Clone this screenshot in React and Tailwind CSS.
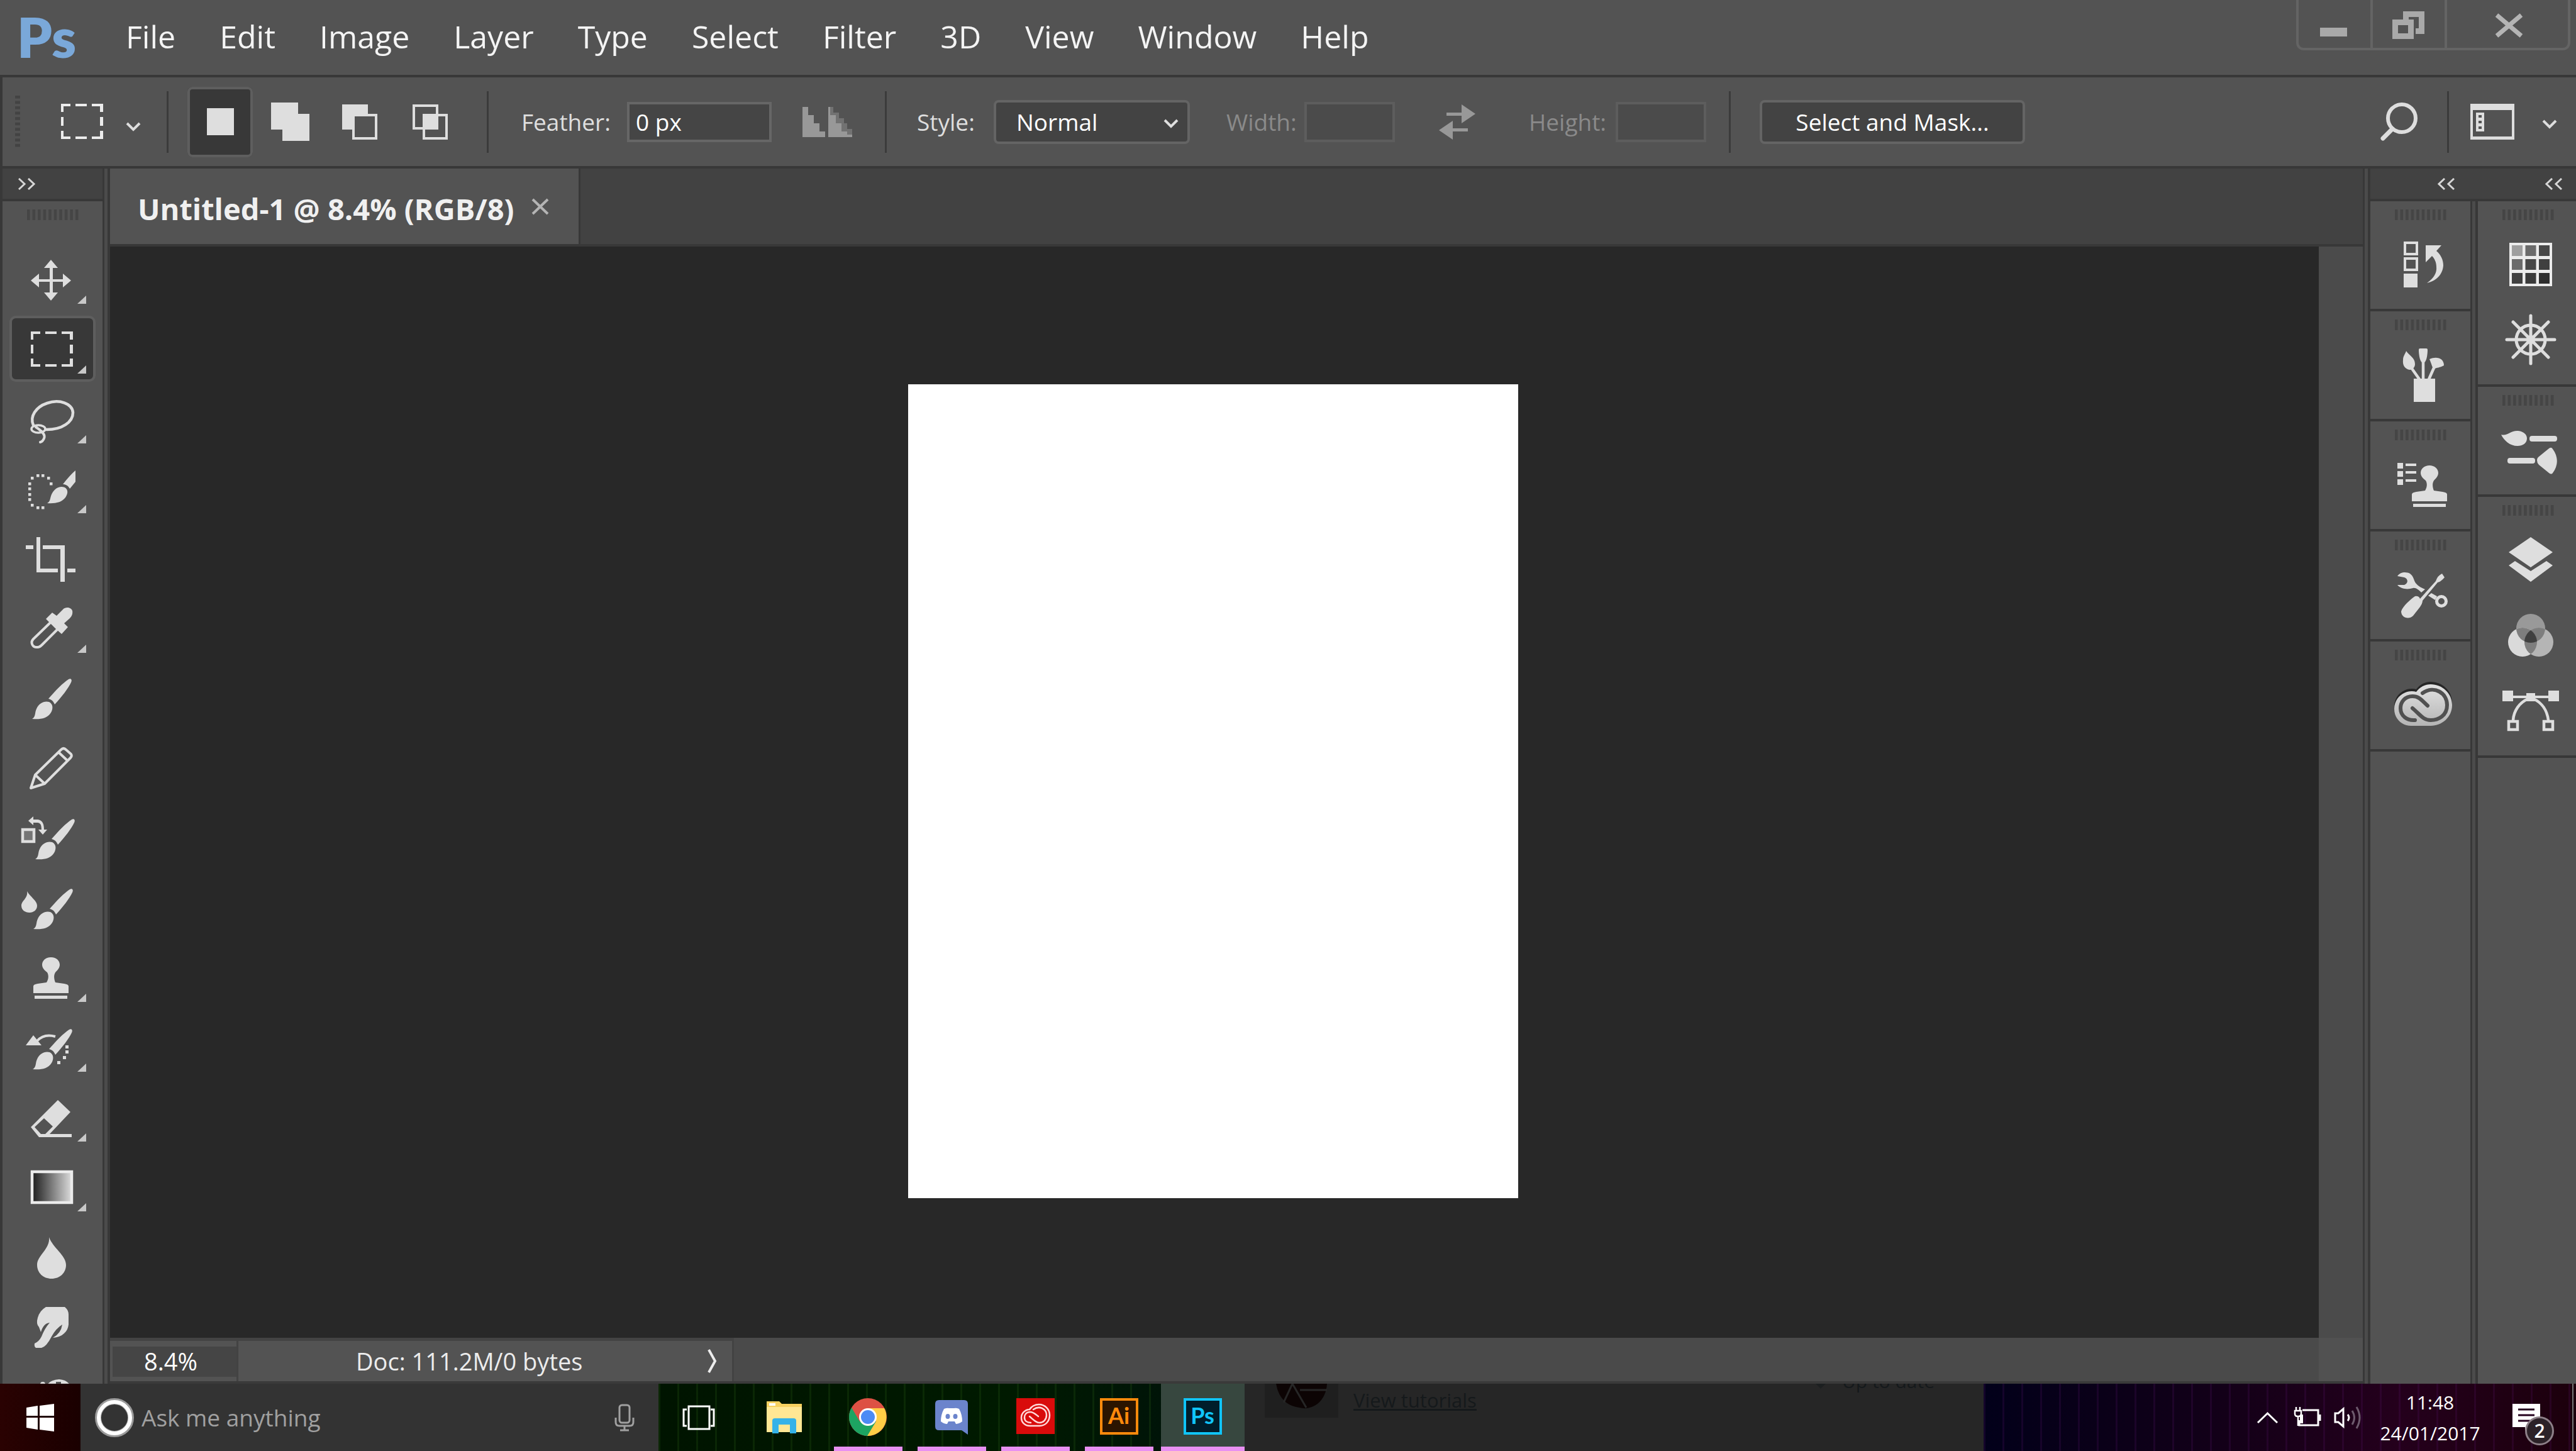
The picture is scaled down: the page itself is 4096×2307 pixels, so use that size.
import React, { useState } from 'react';

const MENUS = ['File', 'Edit', 'Image', 'Layer', 'Type', 'Select', 'Filter', '3D', 'View', 'Window', 'Help'];

const BRUSH = (
    <>
        <path d="M47 89 C53 86 51 79 54 73 C58 64 66 60 74 62 C80 65 81 72 77 79 C71 89 59 90 47 89 Z" />
        <path d="M73 57 C84 44 97 31 105 26 C109 24 111 27 109 31 C105 40 94 54 83 66 C81 61 78 58 73 57 Z" />
    </>
);

const STAMP = (
    <>
        <path d="M77 24 C85 24 91 29 91 36 C91 41 87 45 84 48 C81 53 82 59 84 64 L98 66 Q105 67 105 70 V81 H49 V70 Q49 67 56 66 L70 64 C73 59 74 53 71 48 C67 45 63 41 63 36 C63 29 69 24 77 24 Z" />
        <rect x="51" y="85" width="52" height="5" />
    </>
);

const QUICK_DOTS = [[47, 39], [56, 35], [64, 35], [73, 39], [77, 48], [43, 48], [43, 56], [43, 65], [43, 73], [47, 82], [56, 86], [64, 86]];

const TOOLS = [
    {
        name: 'Move Tool', more: true, art: (
            <>
                <path d="M77 25 L88 38 H66 Z M77 90 L88 77 H66 Z M45 58 L58 47 V69 Z M109 58 L96 47 V69 Z" />
                <path d="M75 34 H80 V82 H75 Z M54 56 H100 V60 H54 Z" />
            </>
        ),
    },
    {
        name: 'Rectangular Marquee Tool', more: true, art: (
            <path d="M45 28 H60 V32 H49 V41 H45 Z M68 28 H86 V32 H68 Z M94 28 H112 V41 H107 V32 H94 Z M45 49 H49 V63 H45 Z M107 49 H112 V63 H107 Z M45 71 H49 V80 H60 V84 H45 Z M68 80 H86 V84 H68 Z M94 80 H107 V71 H112 V84 H94 Z" />
        ),
    },
    {
        name: 'Lasso Tool', more: true, art: (
            <g fill="none" stroke="#dedede" strokeWidth="4.5" strokeLinecap="round">
                <path d="M49 66 C43 52 53 37 71 31 C91 24 111 32 112 46 C112 61 95 73 70 73" />
                <ellipse cx="57" cy="72" rx="11" ry="6" strokeWidth="3.5" />
                <path d="M53 69 C62 75 69 81 66 87 Q64 92 60 93" strokeWidth="4" />
            </g>
        ),
    },
    {
        name: 'Quick Selection Tool', more: true, art: (
            <>
                {QUICK_DOTS.map(([x, y]) => <rect key={`${x}-${y}`} x={x - 2} y={y - 2} width="4.5" height="4.5" />)}
                <path d="M71 79 C77 76 75 70 79 63 C84 54 92 51 99 54 C105 58 104 64 100 70 C94 78 83 80 71 79 Z" />
                <path d="M96 49 C102 41 109 33 116 27 V45 L107 56 C104 51 101 49 96 49 Z" />
            </>
        ),
    },
    {
        name: 'Crop Tool', more: false, art: (
            <path d="M54 22 H60 V72 H88 V78 H54 Z M64 35 H99 V93 H92 V41 H64 Z M37 35 H49 V41 H37 Z M103 72 H116 V78 H103 Z" />
        ),
    },
    {
        name: 'Eyedropper Tool', more: true, art: (
            <>
                <path d="M69 41 L79 31 L86 36 L96 26 C101 21 109 23 111 28 C112 33 110 37 107 40 L98 48 L104 54 L94 65 L86 58 L79 51 Z" />
                <path d="M77 46 L49 73 C44 78 47 87 56 86 C59 86 61 84 63 82 L88 57" fill="none" stroke="#dedede" strokeWidth="4" />
            </>
        ),
    },
    { name: 'Brush Tool', more: false, art: BRUSH },
    {
        name: 'Pencil Tool', more: false, art: (
            <path d="M45 88 L52 67 L93 27 Q97 23 101 27 L109 34 Q111 37 108 40 L67 81 Z M52 67 L67 81 M89 31 L104 45" fill="none" stroke="#dedede" strokeWidth="4" strokeLinejoin="round" />
        ),
    },
    {
        name: 'Color Replacement Tool', more: false, art: (
            <>
                <rect x="32" y="43" width="18" height="19" fill="#757575" stroke="#dedede" strokeWidth="4.5" />
                <path d="M41 29 L49 22 V27 H56 Q66 28 66 43 H71 L64 51 L57 43 H62 Q62 32 56 32 H49 V36 Z" />
                <g transform="translate(5 1)">{BRUSH}</g>
            </>
        ),
    },
    {
        name: 'Mixer Brush Tool', more: false, art: (
            <>
                <path d="M39 30 C44 39 55 45 55 53 C55 60 49 64 43 64 C36 64 30 60 30 53 C30 45 41 41 39 30 Z" />
                <g transform="translate(2 1)">{BRUSH}</g>
            </>
        ),
    },
    { name: 'Clone Stamp Tool', more: true, art: STAMP },
    {
        name: 'History Brush Tool', more: true, art: (
            <>
                <path d="M37 53 L49 37 L62 53 Z" />
                <path d="M55 46 Q66 34 84 39" fill="none" stroke="#dedede" strokeWidth="4" />
                <g transform="translate(1 2)">{BRUSH}</g>
                <path d="M100 53 H105 V58 H100 Z M100 61 H105 V66 H100 Z M96 70 H101 V75 H96 Z M87 78 H92 V83 H87 Z" />
            </>
        ),
    },
    {
        name: 'Eraser Tool', more: true, art: (
            <path fillRule="evenodd" d="M45 72 L88 29 L108 48 L75 83 H110 V88 H58 Z M51 72 L66 58 L80 71 L68 83 H61 Z" />
        ),
    },
    {
        name: 'Gradient Tool', more: true, art: (
            <>
                <defs>
                    <linearGradient id="ramp">
                        <stop offset="0" stopColor="#1c1c1c" />
                        <stop offset="1" stopColor="#dcdcdc" />
                    </linearGradient>
                </defs>
                <rect x="47" y="32" width="63" height="49" fill="url(#ramp)" stroke="#ececec" strokeWidth="4.5" />
            </>
        ),
    },
    {
        name: 'Blur Tool', more: false, art: (
            <path d="M74 25 C80 42 101 54 101 69 C101 82 91 91 78 91 C65 91 55 82 55 69 C55 54 76 44 74 25 Z" />
        ),
    },
    {
        name: 'Smudge Tool', more: false, art: (
            <path d="M69 25 H99 Q105 30 105 37 V53 Q104 62 98 67 Q92 73 80 74 Q93 67 95 53 Q85 59 78 72 Q70 88 62 90 H53 Q50 88 51 83 Q58 80 62 72 Q67 59 75 50 Q65 51 61 65 L58 57 Q53 52 56 42 Q59 31 69 25 Z" />
        ),
    },
    {
        name: 'Sponge Tool', more: true, art: (
            <>
                <path fillRule="evenodd" d="M70 40 Q74 30 90 29 Q104 30 109 41 V60 H70 Z M85 33 H93 V37 H85 Z" />
                <circle cx="64" cy="37" r="4" />
            </>
        ),
    },
];

const CLOUD = 'M65 134 C49 134 38 122 38 107 C38 91 51 79 66 79 Q70 79 73 80 C79 72 87 68 96 68 C114 68 130 82 130 101 C130 120 114 134 96 134 Z';

const DOCK_LEFT = [
    {
        height: 'h-[175px]', name: 'History', art: (
            <>
                <path d="M55 66 H74 V84 H55 Z M55 91 H74 V109 H55 Z" fill="none" stroke="#dedede" strokeWidth="4" />
                <rect x="53" y="115" width="22" height="22" />
                <path d="M88 70 H113 L105 79 C112 85 116 93 116 102 C115 117 104 127 90 130 C101 122 106 114 105 104 C105 97 102 91 98 87 L88 97 Z" />
            </>
        ),
    },
    {
        height: 'h-[175px]', name: 'Brush Presets', art: (
            <>
                <rect x="69" y="107" width="34" height="37" />
                <path d="M66 91 L78 108 M84 80 V108 M101 90 L93 108" fill="none" stroke="#dedede" strokeWidth="4.5" />
                <path d="M57 63 C62 71 71 73 71 84 C71 89 67 93 63 93 C55 92 51 86 52 77 C52 71 56 67 57 63 Z" />
                <path d="M77 61 Q77 59 79 59 H89 Q91 59 91 61 C91 70 89 82 84 82 C79 82 77 70 77 61 Z" />
                <path d="M94 76 C106 71 117 75 117 86 C110 90 106 89 101 92 C98 89 98 85 94 76 Z" />
            </>
        ),
    },
    {
        height: 'h-[175px]', name: 'Clone Source', art: (
            <>
                <path d="M43 66 H52 V75 H43 Z M43 79 H52 V88 H43 Z M43 92 H52 V101 H43 Z M56 67 H73 V71 H56 Z M56 79 H73 V83 H56 Z M56 92 H73 V96 H56 Z" />
                <g transform="translate(17 46)">{STAMP}</g>
            </>
        ),
    },
    {
        height: 'h-[175px]', name: 'Tool Presets', art: (
            <>
                <path d="M43 71 C48 64 57 64 63 67 C69 71 69 78 72 82 C76 87 82 90 87 92 L81 97 C77 93 72 89 68 90 C58 93 48 91 43 85 H54 C61 82 60 75 54 73 Z" />
                <path d="M92 102 L97 98 L106 103 L103 109 Z" />
                <circle cx="113" cy="111" r="7.5" fill="none" stroke="#dedede" strokeWidth="5" />
                <path d="M114 67 L118 73 Q112 80 107 81 L83 110 Q83 114 79 120 L68 134 C61 141 49 137 49 127 C52 118 64 108 71 103 Q77 102 79 107 L104 79 Q107 70 114 67 Z" />
            </>
        ),
    },
    {
        height: 'h-[175px]', name: 'Libraries', art: (
            <>
                <defs>
                    <linearGradient id="cloud" x1="0" y1="0" x2="0" y2="1">
                        <stop offset="0" stopColor="#e2e2e2" />
                        <stop offset="1" stopColor="#b4b4b4" />
                    </linearGradient>
                </defs>
                <path d={CLOUD} fill="#262626" transform="translate(0 -4)" />
                <path d={CLOUD} fill="url(#cloud)" />
                <g fill="none" stroke="#505050" strokeWidth="6" strokeLinecap="round">
                    <path d="M83 82 C102 69 122 82 122 101 C122 118 108 125 96 125 C84 125 80 117 67 106" />
                    <path d="M91 102 C82 94 78 87 67 87 C55 87 48 96 48 106 C48 118 58 126 71 125" />
                </g>
            </>
        ),
    },
];

const SWATCHES = [
    ['#9f9f9f', '#6b6b6b', '#484848'],
    ['#6b6b6b', '#484848', '#404040'],
    ['#404040', '#3a3a3a', '#2f2f2f'],
];

const DOCK_RIGHT = [
    {
        height: 'h-[295px]', name: 'Color and Navigator', art: (
            <>
                <rect x="50" y="66" width="68" height="69" fill="#ececec" />
                {SWATCHES.map((row, r) => row.map((fill, c) => (
                    <rect key={`${r}-${c}`} x={54 + c * 21.5} y={70 + r * 22} width="17" height="17" fill={fill} />
                )))}
                <g fill="none" stroke="#dedede" strokeWidth="5" strokeLinecap="round">
                    <circle cx="84" cy="220" r="23" />
                    <path d="M84 182 V258 M46 220 H122 M56 192 L112 248 M112 192 L56 248" />
                </g>
                <circle cx="84" cy="220" r="7" />
            </>
        ),
    },
    {
        height: 'h-[175px]', name: 'Brush Settings', art: (
            <>
                <path d="M37 76 C47 79 52 69 64 70 C73 71 78 76 78 82 C78 90 71 94 63 94 C51 94 42 86 37 76 Z" />
                <rect x="82" y="78" width="44" height="9" rx="4" />
                <rect x="47" y="113" width="44" height="9" rx="4" />
                <path d="M94 117 Q94 113 97 111 L113 98 Q117 95 119 99 C128 111 128 125 119 137 Q117 140 113 137 L97 124 Q94 121 94 117 Z" />
            </>
        ),
    },
    {
        height: 'h-[415px]', name: 'Layers, Channels and Paths', art: (
            <>
                <path d="M84 64 L119 88 L84 112 L49 88 Z M49 109 L59 102 L84 118 L109 102 L119 109 L84 135 Z" />
                <clipPath id="top"><circle cx="84" cy="209" r="23" /></clipPath>
                <clipPath id="left"><circle cx="71" cy="231" r="23" /></clipPath>
                <clipPath id="both"><circle cx="71" cy="231" r="23" clipPath="url(#top)" /></clipPath>
                <circle cx="84" cy="209" r="23" fill="#999" />
                <circle cx="71" cy="231" r="23" fill="#dadada" />
                <circle cx="97" cy="231" r="23" fill="#b5b5b5" />
                <circle cx="71" cy="231" r="23" fill="#7e7e7e" clipPath="url(#top)" />
                <circle cx="97" cy="231" r="23" fill="#7e7e7e" clipPath="url(#top)" />
                <circle cx="97" cy="231" r="23" fill="#7e7e7e" clipPath="url(#left)" />
                <circle cx="97" cy="231" r="23" fill="#404040" clipPath="url(#both)" />
                <path d="M39 308 H56 V325 H39 Z M112 308 H129 V325 H112 Z M77 312 H91 V325 H77 Z M56 316 H112 V320 H56 Z" />
                <path d="M80 321 C66 327 57 340 56 355 M88 321 C102 327 110 340 112 355 M49 357 H63 V370 H49 Z M105 357 H119 V370 H105 Z" fill="none" stroke="#dedede" strokeWidth="4.5" />
            </>
        ),
    },
];

// Little ribbed handle on top of each panel
const Grip = () => (
    <svg className="w-[82px] h-[17px]" viewBox="0 0 82 17">
        {[...Array(10)].map((_, i) => <rect key={i} x={i * 8.55} width="4.5" height="17" fill="#454545" />)}
    </svg>
);

const Divider = ({ className }) => <div className={`w-[3px] h-[98px] shrink-0 bg-[#3b3b3b] ${className}`} />;

const Gutter = () => <div className="w-3 shrink-0 bg-[#4b4b4b] border-l-[3px] border-r-4 border-[#383838]" />;

const Chevron = ({ className }) => (
    <svg className={`w-6 h-[15px] shrink-0 ${className}`} viewBox="0 0 24 15" fill="none" stroke="#dedede" strokeWidth="4">
        <path d="M2 2 L12 12 L22 2" />
    </svg>
);

const Collapse = ({ flip, label }) => (
    <button aria-label={label} className="w-[27px] h-[19px]">
        <svg className={flip ? 'w-full h-full rotate-180' : 'w-full h-full'} viewBox="0 0 27 19" fill="none" stroke="#d6d6d6" strokeWidth="3">
            <path d="M11 1 L2 9.500 L11 18 M26 1 L17 9.500 L26 18" />
        </svg>
    </button>
);

const MenuBar = () => (
    <header className="flex items-center h-[123px] pb-1 shrink-0 border-b-4 border-[#383838]">
        <span className="w-[200px] pl-[27px] shrink-0 font-['Lato'] font-extrabold text-[88px] leading-none text-[#7aa8d9]">Ps</span>
        <nav className="flex gap-[70px]">
            {MENUS.map(m => <button key={m} className="text-[50px] leading-none text-[#f4f4f4]">{m}</button>)}
        </nav>
        <div className="flex self-start ml-auto mr-[9px] w-[436px] h-20 border-x-4 border-b-4 border-[#646464] rounded-b-xl">
            <button aria-label="Minimize" className="w-[118px] border-r-4 border-[#646464]">
                <svg className="w-full h-full" viewBox="0 0 114 76"><rect x="34" y="44" width="43" height="14" fill="#a9a9a9" /></svg>
            </button>
            <button aria-label="Restore" className="w-[118px] border-r-4 border-[#646464]">
                <svg className="w-full h-full" viewBox="0 0 114 76" fill="#a9a9a9">
                    <path fillRule="evenodd" d="M31 31 H65 V62 H31 Z M40 40 V53 H56 V40 Z" />
                    <path d="M48 18 H82 V54 H68 V45 H73 V27 H57 V31 H48 Z" />
                </svg>
            </button>
            <button aria-label="Close" className="flex-1">
                <svg className="w-full h-full" viewBox="0 0 192 76" stroke="#b4b4b4" strokeWidth="7">
                    <path d="M79 24 L118 57 M118 24 L79 57" />
                </svg>
            </button>
        </div>
    </header>
);

const MODES = [
    { name: 'New selection', art: <path d="M31 34 H74 V77 H31 Z" /> },
    { name: 'Add to selection', art: <path d="M22 25 H65 V43 H83 V86 H40 V68 H22 Z" /> },
    { name: 'Subtract from selection', art: <path fillRule="evenodd" d="M24 28 H65 V43 H80 V84 H40 V68 H24 Z M44 47 V80 H76 V47 Z" /> },
    { name: 'Intersect with selection', art: <path fillRule="evenodd" d="M25 28 H66 V43 H81 V84 H41 V68 H25 Z M29 32 V64 H41 V43 H62 V32 Z M66 47 V68 H45 V80 H77 V47 Z" /> },
];

const OptionsBar = () => {
    const [mode, setMode] = useState(0);
    const [feather, setFeather] = useState('0 px');

    return (
        <div className="flex items-center h-[145px] shrink-0 border-l-4 border-b-4 border-[#383838] text-[37px] text-[#dedede]">
            <svg className="ml-5 w-2 h-[83px] shrink-0" viewBox="0 0 8 83">
                {[...Array(10)].map((_, i) => <rect key={i} y={i * 8.55} width="8" height="4.5" fill="#434343" />)}
            </svg>
            <button aria-label="Tool preset" className="flex items-center ml-[65px]">
                <svg className="w-[67px] h-[57px]" viewBox="45 28 67 57" fill="#ececec">{TOOLS[1].art}</svg>
                <Chevron className="ml-9 mt-4" />
            </button>
            <Divider className="ml-[41px]" />
            <div className="flex gap-[7px] ml-[30px]">
                {MODES.map((m, i) => (
                    <button
                        key={m.name}
                        aria-label={m.name}
                        onClick={() => setMode(i)}
                        className={`w-[104px] h-28 rounded-lg ${mode === i ? 'bg-[#383838] outline-4 -outline-offset-4 outline-[#5e5e5e]' : ''}`}
                    >
                        <svg className="w-full h-full" viewBox="0 0 104 112" fill="#dedede">{m.art}</svg>
                    </button>
                ))}
            </div>
            <Divider className="ml-[39px]" />
            <label htmlFor="feather" className="ml-[52px] w-[168px]">Feather:</label>
            <input
                id="feather"
                value={feather}
                onChange={e => setFeather(e.target.value)}
                className="w-[230px] h-16 pl-2.5 border-4 border-[#666] bg-[#454545] text-white"
            />
            <svg className="ml-[49px] w-20 h-12 shrink-0" viewBox="0 0 80 48">
                <path d="M0 0 H9 V13 H18 V26 H27 V39 H36 V48 H0 Z" fill="#989898" />
                <path d="M41 0 H49 V9 H58 V18 H66 V26 H71 V35 H79 V48 H41 Z" fill="#727272" />
                <path d="M41 0 H44 V13 H53 V26 H62 V39 H71 V44 H79 V48 H41 Z" fill="#989898" />
            </svg>
            <Divider className="ml-[51px]" />
            <label htmlFor="style" className="ml-12 w-[122px]">Style:</label>
            <div className="relative">
                <select id="style" className="appearance-none w-[312px] h-[70px] pl-8 border-4 border-[#646464] rounded-lg bg-[#434343] text-white">
                    <option>Normal</option>
                    <option>Fixed Ratio</option>
                    <option>Fixed Size</option>
                </select>
                <Chevron className="absolute right-[18px] top-[30px] pointer-events-none" />
            </div>
            <label htmlFor="width" className="ml-[58px] w-[124px] text-[#8a8a8a]">Width:</label>
            <input id="width" disabled className="w-36 h-16 border-4 border-[#5d5d5d] bg-[#4b4b4b]" />
            <button aria-label="Swap width and height" className="ml-[70px]">
                <svg className="w-[58px] h-14" viewBox="0 0 58 56" fill="#989898">
                    <path d="M12 13 H36 V0 L58 15 L36 30 V18 H12 Z M46 38 H22 V26 L0 41 L22 56 V43 H46 Z" />
                </svg>
            </button>
            <label htmlFor="height" className="ml-[85px] w-[138px] text-[#8a8a8a]">Height:</label>
            <input id="height" disabled className="w-36 h-16 border-4 border-[#5d5d5d] bg-[#4b4b4b]" />
            <Divider className="ml-9" />
            <button className="ml-[46px] w-[422px] h-[70px] border-4 border-[#646464] rounded-lg bg-[#434343] text-white">Select and Mask...</button>
            <button aria-label="Search" className="ml-auto">
                <svg className="w-[60px] h-[61px]" viewBox="0 0 60 61" fill="none" stroke="#dedede" strokeWidth="6" strokeLinecap="round">
                    <circle cx="34" cy="25" r="22" />
                    <path d="M19 42 L4 57" strokeWidth="7" />
                </svg>
            </button>
            <Divider className="ml-[46px]" />
            <button aria-label="Workspace" className="flex items-center ml-[34px] mr-[30px]">
                <svg className="w-[70px] h-[57px]" viewBox="0 0 70 57" fill="#dedede">
                    <path fillRule="evenodd" d="M0 0 H70 V57 H0 Z M4 10 V52 H66 V10 Z" />
                    <path fillRule="evenodd" d="M9 14 H22 V44 H9 Z M13 18 V22 H18 V18 Z M13 27 V31 H18 V27 Z M13 36 V40 H18 V36 Z" />
                </svg>
                <Chevron className="ml-[44px] mt-2" />
            </button>
        </div>
    );
};

const Toolbar = () => {
    const [tool, setTool] = useState(1);

    return (
        <aside className="flex flex-col w-[163px] shrink-0 border-l-4 border-[#383838]">
            <div className="flex items-center h-[52px] shrink-0 pl-[25px] bg-[#424242] border-b-4 border-[#383838]">
                <Collapse flip label="Expand tools" />
            </div>
            <div className="flex justify-center h-[68px] shrink-0 pt-[13px]"><Grip /></div>
            {TOOLS.map((t, i) => (
                <button key={t.name} aria-label={t.name} onClick={() => setTool(i)} className="h-[111px] shrink-0">
                    <svg className="w-[159px] h-[111px]" viewBox="0 0 159 111" fill="#dedede">
                        {tool === i && <rect x="13" y="5" width="133" height="101" rx="8" fill="#383838" stroke="#5e5e5e" strokeWidth="4" />}
                        {t.art}
                        {t.more && <path d="M119 95 L133 82 V95 Z" fill="#c8c8c8" />}
                    </svg>
                </button>
            ))}
        </aside>
    );
};

const Dock = ({ panels, width }) => (
    <div className={width}>
        {panels.map(p => (
            <section key={p.name} aria-label={p.name} className={`relative border-b-4 border-[#383838] ${p.height}`}>
                <div className="flex pl-[39px] pt-[13px]"><Grip /></div>
                <svg className="absolute inset-0 w-full h-full overflow-visible" fill="#dedede">{p.art}</svg>
            </section>
        ))}
    </div>
);

const DockArea = () => (
    <aside className="flex flex-col w-[327px] shrink-0">
        <div className="flex h-[52px] shrink-0 bg-[#424242] border-b-4 border-[#383838]">
            <div className="flex items-center justify-end w-[159px] pr-[25px]"><Collapse label="Expand left dock" /></div>
            <div className="flex items-center justify-end flex-1 pr-[22px]"><Collapse label="Expand right dock" /></div>
        </div>
        <div className="flex flex-1">
            <Dock panels={DOCK_LEFT} width="w-[159px]" />
            <Gutter />
            <Dock panels={DOCK_RIGHT} width="w-[156px]" />
        </div>
    </aside>
);

const Document = () => (
    <main className="flex flex-col flex-1 min-w-0">
        <div className="flex h-[124px] shrink-0 bg-[#424242] border-b-4 border-[#383838]">
            <div className="flex items-center w-[748px] pl-[44px] bg-[#535353] border-r-[3px] border-[#383838]">
                <span className="w-[626px] pt-2 text-[47px] font-bold whitespace-nowrap text-[#f0f0f0]">Untitled-1 @ 8.4% (RGB/8)</span>
                <button aria-label="Close document">
                    <svg className="w-7 h-[27px]" viewBox="0 0 28 27" stroke="#b4b4b4" strokeWidth="4"><path d="M2 2 L26 25 M26 2 L2 25" /></svg>
                </button>
            </div>
        </div>
        <div className="flex flex-1 min-h-0">
            <div className="flex items-center justify-center flex-1 pr-1 pb-1 bg-[#282828]">
                <div className="w-[970px] h-[1294px] bg-white" />
            </div>
            <div className="w-[70px] bg-[#4b4b4b]" />
        </div>
        <div className="flex h-[73px] shrink-0 border-b-4 border-[#3a3a3a] text-[38px]">
            <div className="flex w-[989px] pt-[5px] bg-[#434343]">
                <div className="w-[204px] bg-[#535353] border-r-[3px] border-[#434343] pt-1 pl-1">
                    <input aria-label="Zoom" defaultValue="8.4%" className="w-full h-12 pl-[50px] bg-[#454545] text-white" />
                </div>
                <div className="flex items-center flex-1 pl-[187px] pr-6 bg-[#535353] text-[#ececec]">
                    <span>Doc: 111.2M/0 bytes</span>
                    <button aria-label="Status options" className="ml-auto">
                        <svg className="w-[15px] h-[38px]" viewBox="0 0 15 38" fill="none" stroke="#ececec" strokeWidth="4"><path d="M2 1 L12 19 L2 37" /></svg>
                    </button>
                </div>
            </div>
            <div className="flex-1 bg-[#4a4a4a] border-l-[3px] border-[#434343]" />
            <div className="w-[70px] bg-[#515151]" />
        </div>
    </main>
);

const CC_MARK = (
    <g fill="none" stroke="#ffd9d9" strokeWidth="2.500" strokeLinecap="round">
        <path d="M22 44 C13 44 8 38 8 31 C8 24 14 18 21 18 C25 12 30 10 36 10 C46 10 53 18 53 27 C53 37 46 44 37 44 Z" />
        <path d="M27 18 C37 11 48 17 48 27 C48 34 43 39 37 39 C31 39 27 34 21 29" />
        <path d="M35 29 C30 25 27 22 22 22 C16 22 13 26 13 31 C13 36 17 39 23 39" />
    </g>
);

const APPS = [
    {
        name: 'File Explorer', art: (
            <>
                <path d="M2 5 H22 L26 9 H58 V54 H2 Z" fill="#f7d060" />
                <path d="M2 14 H58 V54 H2 Z" fill="#ffe794" />
                <path d="M6 8 H16 V12 H6 Z" fill="#fff" />
                <path d="M11 56 V36 Q11 32 15 32 H45 Q49 32 49 36 V56 H39 V42 H21 V56 Z" fill="#35b2e8" />
            </>
        ),
    },
    {
        name: 'Chrome', open: true, art: (
            <>
                <circle cx="30" cy="30" r="30" fill="#dd5144" />
                <path d="M4 15 A30 30 0 0 0 30 60 L43 37 L30 30 L17 37 Z" fill="#1da462" />
                <path d="M56 16 A30 30 0 0 1 29 60 L43 37 L30 16 Z" fill="#ffcd46" />
                <path d="M30 16 H56 L50 8 H20 Z" fill="#dd5144" />
                <circle cx="30" cy="30" r="14" fill="#fff" />
                <circle cx="30" cy="30" r="11" fill="#4c8bf5" />
            </>
        ),
    },
    {
        name: 'Discord', open: true, art: (
            <>
                <path d="M10 3 H50 Q56 3 56 9 V58 L46 51 H10 Q4 51 4 45 V9 Q4 3 10 3 Z" fill="#6b84cc" />
                <path d="M18 17 Q23 15 26 16 H34 Q37 15 42 17 Q47 26 47 37 Q42 41 37 41 L35 37 H25 L23 41 Q18 41 13 37 Q13 26 18 17 Z" fill="#fff" />
                <ellipse cx="24" cy="29" rx="3.500" ry="4" fill="#6b84cc" />
                <ellipse cx="36" cy="29" rx="3.500" ry="4" fill="#6b84cc" />
            </>
        ),
    },
    { name: 'Creative Cloud', open: true, art: <><rect width="61" height="57" fill="#d90b0b" />{CC_MARK}</> },
    {
        name: 'Illustrator', open: true, art: (
            <>
                <rect x="2" y="2" width="57" height="54" fill="#2b1400" stroke="#ff8a0c" strokeWidth="4" />
                <text x="30" y="41" textAnchor="middle" fontFamily="Lato" fontWeight="bold" fontSize="36" fill="#ff8a0c">Ai</text>
            </>
        ),
    },
    {
        name: 'Photoshop', open: true, active: true, art: (
            <>
                <rect x="2" y="2" width="57" height="54" fill="#001d2b" stroke="#10c5fa" strokeWidth="4" />
                <text x="30" y="41" textAnchor="middle" fontFamily="Lato" fontWeight="bold" fontSize="36" fill="#10c5fa">Ps</text>
            </>
        ),
    },
];

const Taskbar = () => (
    <footer className="flex h-[107px] shrink-0 overflow-hidden bg-[#262626] text-white">
        <button aria-label="Start" className="w-32 shrink-0 bg-[#1c0000] bg-linear-to-r from-[#2a0202] to-[#1a0000]">
            <svg className="w-32 h-[107px]" viewBox="0 0 128 107" fill="#fff">
                <path d="M42 38 L60 35 V51 H42 Z M63 35 L86 32 V51 H63 Z M42 54 H60 V73 L42 70 Z M63 54 H86 V76 L63 73 Z" />
            </svg>
        </button>
        <div className="flex items-center w-[919px] shrink-0 pl-[23px] bg-[#333]">
            <svg className="w-[62px] h-[62px]" viewBox="0 0 62 62" fill="none">
                <circle cx="31" cy="31" r="26" stroke="#9b9b9b" strokeWidth="10" />
                <circle cx="31" cy="31" r="25" stroke="#fff" strokeWidth="6" />
            </svg>
            <input aria-label="Search" placeholder="Ask me anything" className="w-[764px] pl-3 text-[37px] placeholder:text-[#a0a0a0] bg-transparent" />
            <button aria-label="Speak">
                <svg className="w-8 h-11" viewBox="0 0 32 44" fill="none" stroke="#a0a0a0" strokeWidth="3">
                    <rect x="8" y="2" width="16" height="28" rx="4" />
                    <path d="M2 22 V29 Q2 35 8 35 H24 Q30 35 30 29 V22 M16 35 V42 M9 42 H23" />
                </svg>
            </button>
        </div>
        <div className="flex shrink-0 bg-[repeating-linear-gradient(90deg,rgba(40,90,20,0.25)_0_3px,transparent_3px_30px),linear-gradient(90deg,#001400_0%,#001a00_60%,#00110c_100%)]">
            <button aria-label="Task view" className="flex items-center justify-center w-[134px] pr-1.5">
                <svg className="w-[52px] h-10" viewBox="0 0 52 40" fill="none" stroke="#fff" strokeWidth="3">
                    <path d="M10 2 H43 V38 H10 Z M7 7 H2 V33 H7 M45 7 H50 V33 H45" />
                </svg>
            </button>
            {APPS.map(a => (
                <button
                    key={a.name}
                    aria-label={a.name}
                    className={`flex flex-col items-center w-[133px] ${a.active ? 'bg-[#37473f]' : ''}`}
                >
                    <svg className="w-[61px] h-[61px] mt-[23px] overflow-visible" viewBox="0 0 61 61">{a.art}</svg>
                    {a.open && <span className={`mt-auto h-[7px] bg-[#e890f2] ${a.active ? 'w-full' : 'w-[109px]'}`} />}
                </button>
            ))}
        </div>
        {/* start page of the window behind shows through here */}
        <div className="flex items-start flex-1 pl-8 text-3xl text-[#15191b]">
            <svg className="w-[117px] h-[54px]" viewBox="0 0 117 54">
                <rect width="117" height="54" fill="#1f1f1f" />
                <path d="M18 0 H99 Q98 20 84 32 Q70 42 55 38 Q24 34 18 0 Z" fill="#0c0404" />
                <path d="M44 0 L30 30 M44 0 L66 38 M99 10 H56" stroke="#262626" strokeWidth="3" />
            </svg>
            <a href="#tutorials" className="ml-6 mt-2 text-[31px] underline">View tutorials</a>
            <div className="flex items-start ml-auto mr-[78px] -mt-[22px]">
                <svg className="w-5 h-[30px] mr-6" viewBox="0 0 20 30" fill="#1c1f20"><path d="M7 0 H13 V20 H20 L10 30 L0 20 H7 Z" /></svg>
                <span className="leading-9">Up to date</span>
            </div>
        </div>
        <div className="flex items-center w-[942px] shrink-0 bg-[repeating-linear-gradient(90deg,rgba(90,20,110,0.2)_0_3px,transparent_3px_30px),linear-gradient(90deg,#02001a_0%,#0a0018_20%,#150018_45%,#24001c_70%,#1c000c_100%)]">
            <button aria-label="Show hidden icons" className="ml-[434px]">
                <svg className="w-[35px] h-5" viewBox="0 0 35 20" fill="none" stroke="#fff" strokeWidth="3"><path d="M2 18 L17.500 3 L33 18" /></svg>
            </button>
            <svg className="ml-[25px] w-[43px] h-7 overflow-visible" viewBox="0 0 43 28" fill="none" stroke="#fff" strokeWidth="3">
                <path d="M13 2 H38 V26 H8 V18 M41 9 V19" />
                <path d="M3 -3 V2 M9 -3 V2 M1 3 H11 V8 Q11 12 6 12 Q1 12 1 8 Z M6 12 V27" strokeWidth="2.500" />
                <rect x="9" y="9" width="5" height="14" fill="#fff" stroke="none" />
            </svg>
            <svg className="ml-5 w-[44px] h-[38px]" viewBox="0 0 44 38" fill="none" stroke="#fff" strokeWidth="3">
                <path d="M2 12 H7 L15 5 V33 L7 26 H2 Z M22 14 Q26 19 22 24" />
                <path d="M29 8 Q36 19 29 30 M36 2 Q46 19 36 36" stroke="#6d5a6d" />
            </svg>
            <div className="ml-[26px] w-[166px] text-3xl leading-[49px] text-center whitespace-nowrap">
                <p>11:48</p>
                <p>24/01/2017</p>
            </div>
            <button aria-label="Notifications" className="relative ml-12">
                <svg className="w-11 h-11" viewBox="0 0 44 44">
                    <path d="M0 0 H44 V37 H26 L20 44 V37 H0 Z" fill="#fff" />
                    <path d="M9 9 H35 M9 18 H35 M9 27 H28" stroke="#24001c" strokeWidth="3" />
                </svg>
                <span className="absolute left-5 top-5 w-[46px] h-[46px] rounded-full border-[3px] border-[#8d8088] bg-[#2c2228] text-3xl leading-10 font-semibold text-center">2</span>
            </button>
            <div className="ml-auto mr-1 w-[2px] h-full bg-[#777]" />
        </div>
    </footer>
);

const App = () => (
    <div className="flex flex-col w-full h-screen overflow-hidden bg-[#535353] font-['Open_Sans',sans-serif]">
        <MenuBar />
        <OptionsBar />
        <div className="flex flex-1 min-h-0 overflow-hidden">
            <Toolbar />
            <Gutter />
            <Document />
            <Gutter />
            <DockArea />
        </div>
        <Taskbar />
    </div>
);

export default App;
